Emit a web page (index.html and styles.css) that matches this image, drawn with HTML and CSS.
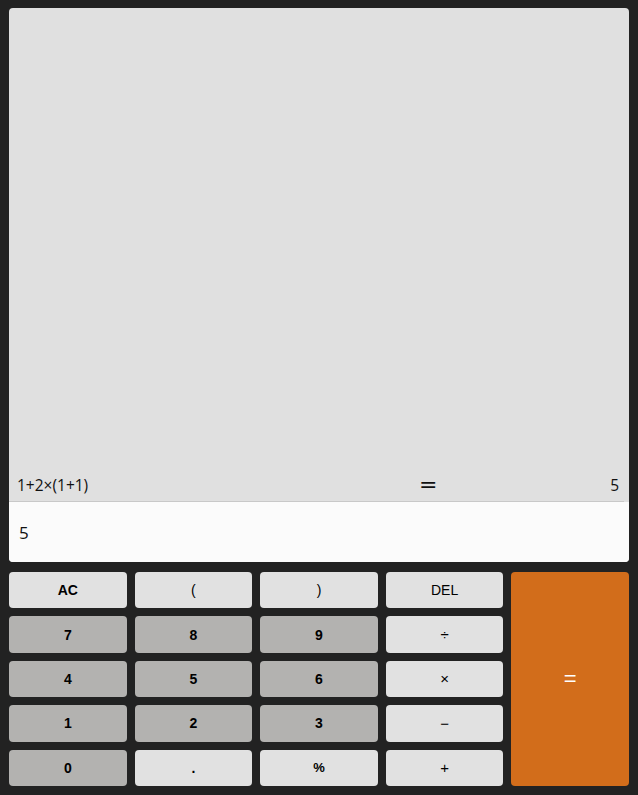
FILE: index.html
```html
<!DOCTYPE html>
<html>
<head>
<meta charset="utf-8">
<link rel="stylesheet" href="styles.css">
</head>
<body>
<div class="app">
  <div class="display">
    <div class="history">
      <div class="hist-row">
        <span class="hist-expr">1+2×(1+1)</span>
        <span class="hist-eq">=</span>
        <span class="hist-res">5</span>
      </div>
    </div>
    <div class="result">5</div>
  </div>
  <div class="keypad">
    <button class="key light bold">AC</button>
    <button class="key light">(</button>
    <button class="key light">)</button>
    <button class="key light">DEL</button>
    <button class="key equals">=</button>
    <button class="key dark bold">7</button>
    <button class="key dark bold">8</button>
    <button class="key dark bold">9</button>
    <button class="key light op">÷</button>
    <button class="key dark bold">4</button>
    <button class="key dark bold">5</button>
    <button class="key dark bold">6</button>
    <button class="key light op">×</button>
    <button class="key dark bold">1</button>
    <button class="key dark bold">2</button>
    <button class="key dark bold">3</button>
    <button class="key light op">−</button>
    <button class="key dark bold">0</button>
    <button class="key light bold">.</button>
    <button class="key light bold pct">%</button>
    <button class="key light op">+</button>
  </div>
</div>
</body>
</html>
```
FILE: styles.css
```css
html, body {
  margin: 0;
  padding: 0;
  background: #222222;
  height: 100%;
}
.app {
  box-sizing: border-box;
  height: 795px;
  padding: 8px 9px 9px 9px;
  display: flex;
  flex-direction: column;
  gap: 10px;
}
.display {
  flex: 1;
  display: flex;
  flex-direction: column;
  border-radius: 4px;
  overflow: hidden;
  background: #e0e0e0;
}
.history {
  flex: 1;
  display: flex;
  flex-direction: column;
  justify-content: flex-end;
  padding-right: 5px;
}
.hist-row {
  display: flex;
  align-items: center;
  height: 32px;
  padding: 0 5px 0 8px;
  border-bottom: 1px solid #c8c8c8;
  font-family: "Open Sans", "Noto Sans", sans-serif;
  font-size: 15.5px;
  color: #111;
}
.hist-expr { flex: 0 0 402px; }
.hist-eq {
  flex: 0 0 auto;
  font-size: 22px;
  font-family: "DejaVu Sans", sans-serif;
  line-height: 1;
}
.hist-res {
  flex: 1;
  text-align: right;
}
.result {
  height: 60px;
  background: #fbfbfb;
  display: flex;
  align-items: center;
  padding-left: 10px;
  font-family: "Open Sans", "Noto Sans", sans-serif;
  font-size: 17px;
  color: #111;
}
.keypad {
  height: 214px;
  display: grid;
  grid-template-columns: repeat(5, 1fr);
  grid-template-rows: repeat(5, 1fr);
  gap: 8px;
}
.key {
  border: none;
  border-radius: 4px;
  font-family: "Liberation Sans", Arial, sans-serif;
  font-size: 14px;
  color: #000;
  padding: 0;
}
.bold { font-weight: bold; }
.op { font-size: 15px; }
.pct { font-size: 13px; }
.light { background: #e1e1e1; }
.dark { background: #b3b2b0; }
.equals {
  grid-column: 5;
  grid-row: 1 / span 5;
  background: #d26d1b;
  color: #fff;
  font-size: 22px;
}
```
